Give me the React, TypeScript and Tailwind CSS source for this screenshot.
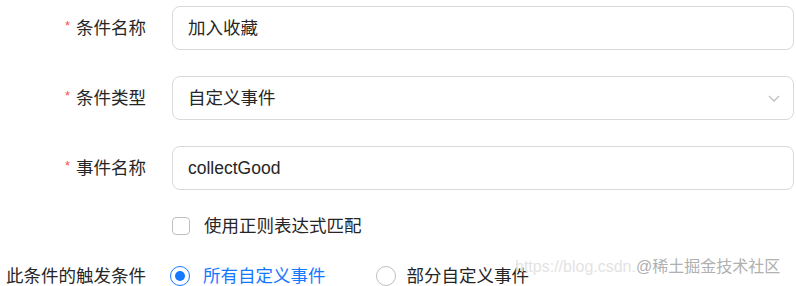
import React from "react";

const font = "font-['Liberation_Sans','Noto_Sans_CJK_SC',sans-serif]";

function Label({ text, required }: { text: string; required?: boolean }) {
  return (
    <div className="w-[146px] shrink-0 flex justify-end items-center text-[17.5px] text-[#262626]">
      {required && (
        <span className="text-[#ff4d4f] text-[13px] mr-[6px] -mt-[4px]">*</span>
      )}
      <span>{text}</span>
    </div>
  );
}

function Row({ children }: { children: React.ReactNode }) {
  return <div className="flex items-center">{children}</div>;
}

export default function App() {
  return (
    <div className={`relative w-[796px] h-[286px] bg-white overflow-hidden ${font}`}>
      <div className="flex flex-col pt-[6px]">
        <Row>
          <Label text="条件名称" required />
          <div className="ml-[26px] mr-[2px] flex-1 h-[44px] rounded-[8px] border border-[#d9d9d9] flex items-center px-[15px] text-[17.5px] text-[#262626]">
            加入收藏
          </div>
        </Row>
        <div className="h-[26px]" />
        <Row>
          <Label text="条件类型" required />
          <div className="ml-[26px] mr-[2px] flex-1 h-[44px] rounded-[8px] border border-[#d9d9d9] flex items-center justify-between pl-[15px] pr-[12px] text-[17.5px] text-[#262626]">
            <span>自定义事件</span>
            <svg width="14" height="14" viewBox="0 0 14 14" fill="none">
              <path d="M2 5l5 5 5-5" stroke="#bfbfbf" strokeWidth="1.3" />
            </svg>
          </div>
        </Row>
        <div className="h-[26px]" />
        <Row>
          <Label text="事件名称" required />
          <div className="ml-[26px] mr-[2px] flex-1 h-[44px] rounded-[8px] border border-[#d9d9d9] flex items-center px-[15px] text-[17.5px] text-[#262626]">
            collectGood
          </div>
        </Row>
        <div className="h-[24px]" />
        <Row>
          <div className="w-[146px] shrink-0" />
          <div className="ml-[26px] flex items-center h-[24px]">
            <span className="w-[18px] h-[18px] rounded-[4px] border border-[#bfbfbf]" />
            <span className="ml-[14px] text-[17.5px] text-[#262626]">使用正则表达式匹配</span>
          </div>
        </Row>
        <div className="h-[25px]" />
        <Row>
          <Label text="此条件的触发条件" />
          <div className="ml-[24px] flex items-center h-[24px]">
            <span className="w-[20px] h-[20px] rounded-full border-[1.5px] border-[#1677ff] flex items-center justify-center">
              <span className="w-[10px] h-[10px] rounded-full bg-[#1677ff]" />
            </span>
            <span className="ml-[13px] text-[17.5px] text-[#1677ff]">所有自定义事件</span>
            <span className="ml-[50px] w-[20px] h-[20px] rounded-full border border-[#bfbfbf]" />
            <span className="ml-[11px] text-[17.5px] text-[#262626]">部分自定义事件</span>
          </div>
        </Row>
      </div>
      <div className="absolute left-[515px] top-[255px] flex items-center text-[16px] whitespace-nowrap">
        <span className="text-[#e3e3e3]">https://blog.csdn.</span>
        <span className="text-[#b0b0b0]">@稀土掘金技术社区</span>
      </div>
    </div>
  );
}
